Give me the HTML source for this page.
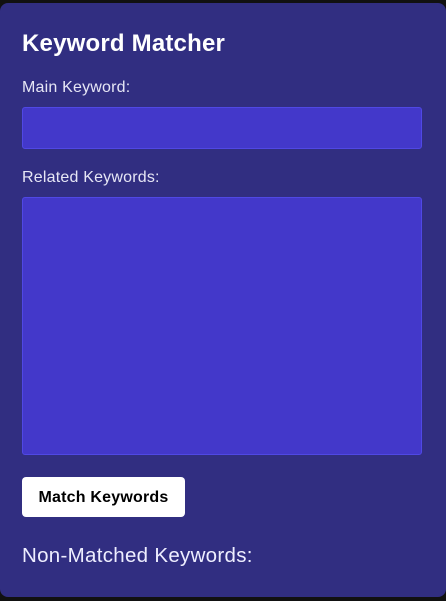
<!DOCTYPE html>
<html><head><style>
html,body{margin:0;padding:0;background:#111;width:446px;height:601px;overflow:hidden;font-family:"Liberation Sans",sans-serif;}
.p{position:absolute;left:0;top:3px;width:446px;height:594px;background:#312e81;border-radius:8px;}
.t{position:absolute;left:22px;top:30px;color:#fff;font-size:24px;font-weight:bold;letter-spacing:0.2px;}
.l{position:absolute;left:22px;color:#e6e6f5;font-size:16px;letter-spacing:0.2px;}
.i{position:absolute;left:22px;width:398px;background:#4338ca;border:1px solid #5048e5;border-radius:3px;}
.b{position:absolute;left:22px;top:477px;width:163px;height:40px;background:#fff;border-radius:4px;color:#000;font-weight:bold;font-size:16px;letter-spacing:0.2px;text-align:center;line-height:41px;}
.n{position:absolute;left:22px;top:544px;color:#eef;font-size:20.5px;letter-spacing:0.3px;}
</style></head><body>
<div class="p"></div>
<div class="t">Keyword Matcher</div>
<div class="l" style="top:79px">Main Keyword:</div>
<div class="i" style="top:107px;height:40px"></div>
<div class="l" style="top:169px">Related Keywords:</div>
<div class="i" style="top:197px;height:256px"></div>
<div class="b">Match Keywords</div>
<div class="n">Non-Matched Keywords:</div>
</body></html>
